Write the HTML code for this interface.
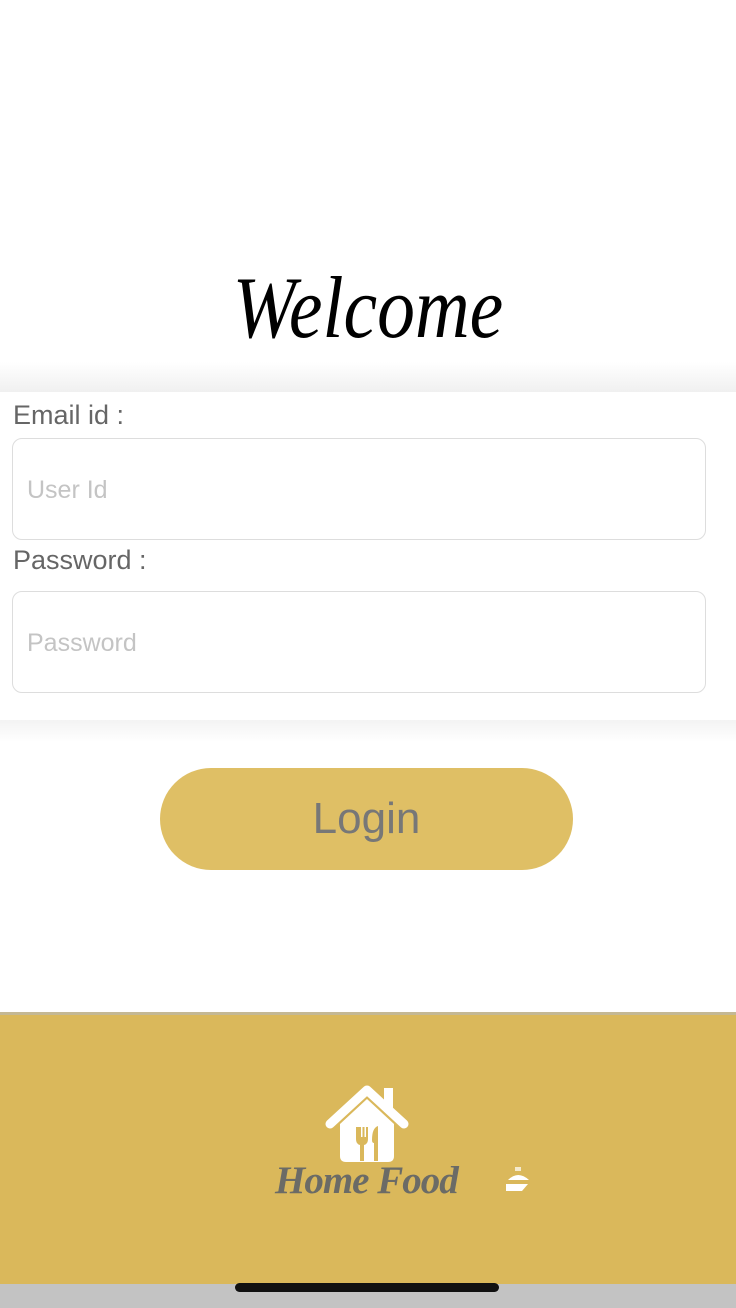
<!DOCTYPE html>
<html><head><meta charset="utf-8"><style>
*{margin:0;padding:0;box-sizing:border-box}
body{width:736px;height:1308px;background:#fff;position:relative;overflow:hidden;font-family:"Liberation Sans",sans-serif}
.welcome{position:absolute;top:258px;left:0;width:736px;text-align:center;font-family:"Liberation Serif",serif;font-style:italic;font-size:88px;color:#000;transform:scaleX(0.86)}
.shadowtop{position:absolute;top:362px;left:0;width:736px;height:30px;background:linear-gradient(#fff,#f0f0f0)}
.card{position:absolute;top:392px;left:0;width:736px;height:328px;background:#fff}
.shadowbot{position:absolute;top:720px;left:0;width:736px;height:22px;background:linear-gradient(#f3f3f3,#fff)}
.lbl{position:absolute;left:13px;font-size:27px;color:#666}
.inp{position:absolute;left:12px;width:694px;height:102px;border:1px solid #ddd;border-radius:10px;font-size:25px;color:#c4c4c4;padding-left:14px;line-height:102px}
.btn{position:absolute;top:768px;left:160px;width:413px;height:102px;border-radius:51px;background:#dfbf65;color:#777;font-size:44px;text-align:center;line-height:102px}
.footer{position:absolute;top:1012px;left:0;width:736px;height:272px;background:#dab85b;border-top:3px solid #c4b894}
.bar{position:absolute;top:1284px;left:0;width:736px;height:24px;background:#c3c3c3}
.home{position:absolute;top:1283px;left:235px;width:264px;height:9px;border-radius:5px;background:#111}
.hf{position:absolute;top:1158px;left:275px;font-family:"Liberation Serif",serif;font-style:italic;font-weight:bold;font-size:39px;color:#6b6b66;letter-spacing:-1px}
</style></head><body>
<div class="welcome">Welcome</div>
<div class="shadowtop"></div>
<div class="card">
<div class="lbl" style="top:8px">Email id :</div>
<div class="inp" style="top:46px">User Id</div>
<div class="lbl" style="top:153px">Password :</div>
<div class="inp" style="top:199px">Password</div>
</div>
<div class="shadowbot"></div>
<div class="btn">Login</div>
<div class="footer"></div>
<svg style="position:absolute;top:1084px;left:324px" width="86" height="82" viewBox="0 0 86 82">
<path d="M6 40 L43 6 L80 40" fill="none" stroke="#fff" stroke-width="9" stroke-linecap="round" stroke-linejoin="round"/>
<rect x="60" y="4" width="9" height="24" fill="#fff"/>
<path d="M16 40 L43 15 L70 40 L70 72 Q70 78 64 78 L22 78 Q16 78 16 72 Z" fill="#fff"/>
<path d="M32 43 v12 q0 5 4 6 v16 h4 v-16 q4 -1 4 -6 v-12 h-2 v10 h-1.5 v-10 h-2 v10 h-1.5 v-10 z" fill="#dab85b"/>
<path d="M50 77 v-18 q-2 0 -2 -3 q0 -12 6 -14 v35 z" fill="#dab85b"/>
</svg>
<div class="hf">Home Food</div>
<svg style="position:absolute;top:1166px;left:504px" width="28" height="26" viewBox="0 0 28 26">
<rect x="11" y="1" width="6" height="4" fill="#fff" opacity=".7"/>
<path d="M4 14 Q14 4 25 14 Z" fill="#fff"/>
<path d="M2 18 h22 l-6 7 h-16 z" fill="#fff"/>
</svg>
<div class="bar"></div>
<div class="home"></div>
</body></html>
